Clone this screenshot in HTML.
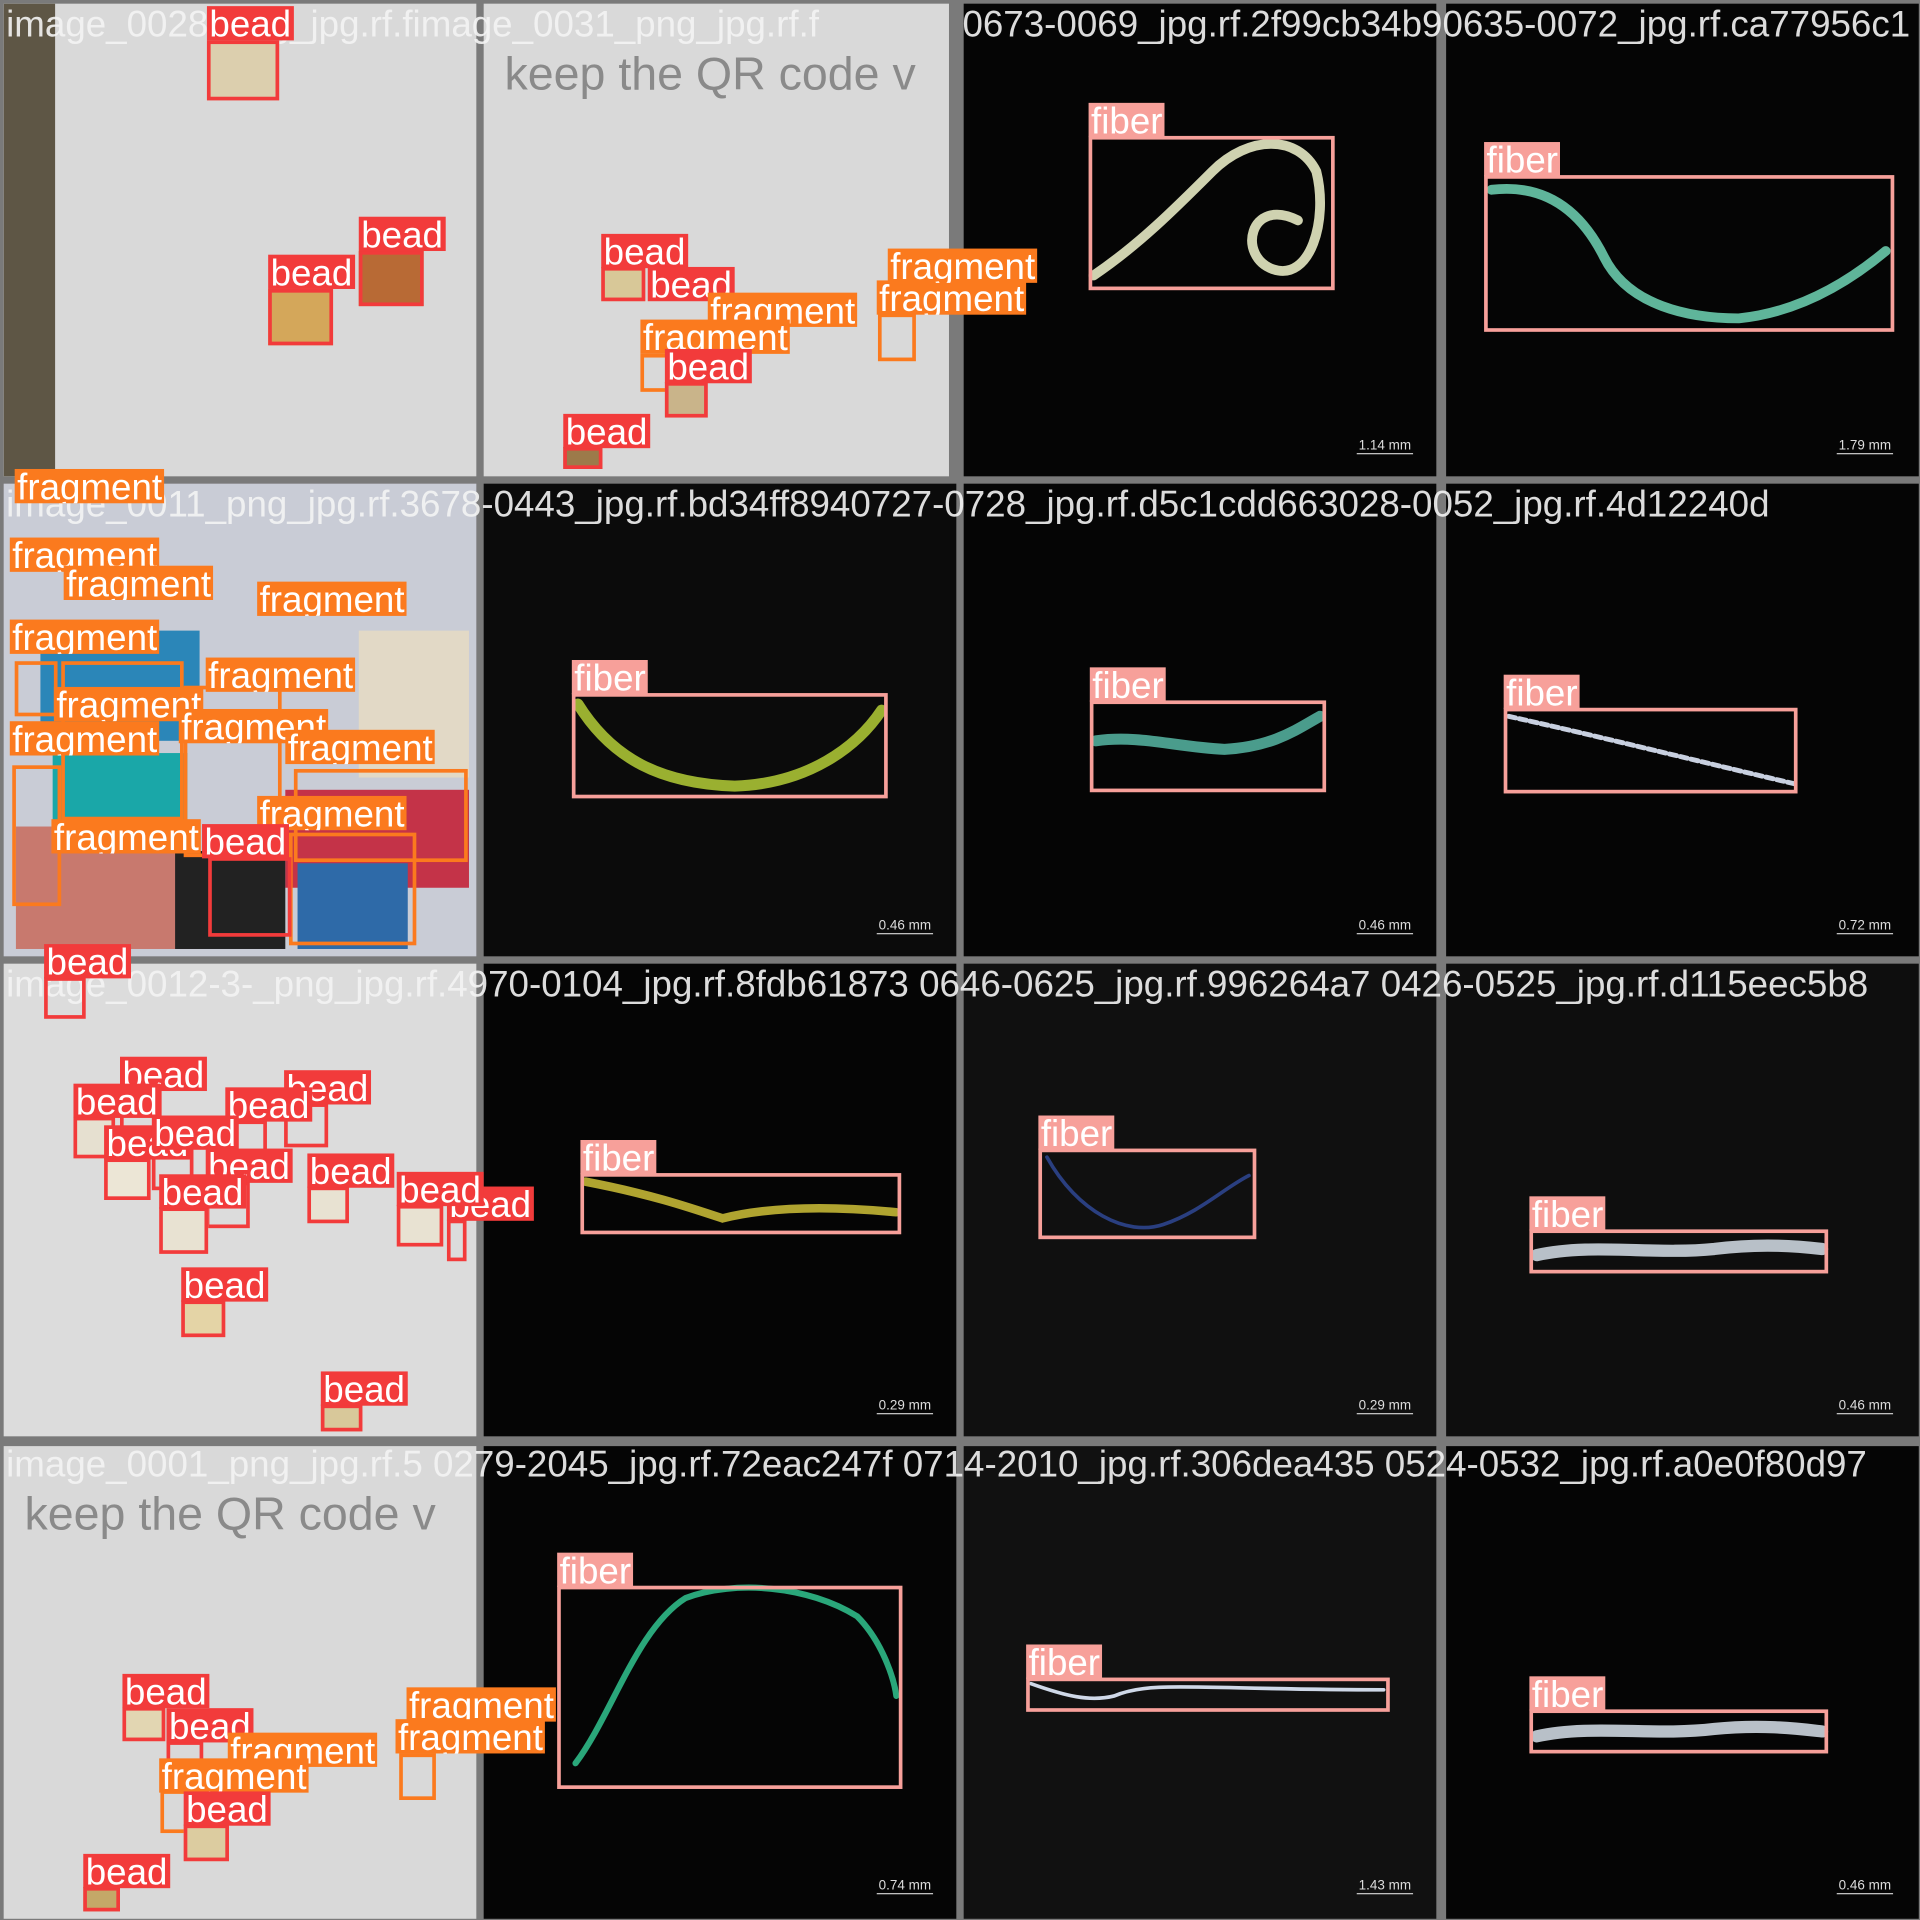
<!DOCTYPE html>
<html><head><meta charset="utf-8"><style>
html,body{margin:0;padding:0;background:#808080;width:1920px;height:1920px;overflow:hidden}
#w{position:absolute;left:0;top:0;width:1568px;height:1568px;transform:scale(1.22449);transform-origin:0 0;background:#7a7a7a;overflow:hidden;font-family:"Liberation Sans",sans-serif}
.t{position:absolute;width:386px;height:386px;overflow:hidden}
.lt{background:#d9d9d9}
.dk{background:#050505}
.b{position:absolute;border:3px solid;box-sizing:border-box}
.r{border-color:#f23b3b}.o{border-color:#fb7a1e}.f{border-color:#f7a09a}
.l{position:absolute;color:#fff;font-size:30px;line-height:31px;height:28px;padding:0 2px;white-space:nowrap;overflow:hidden}
.lr{background:#f23b3b}.lo{background:#fb7a1e}.lf{background:#f7a09a}
.ti{position:absolute;color:#f4f4f4;font-size:30px;line-height:30px;white-space:nowrap;opacity:.9}
.sc{position:absolute;color:#ddd;font-size:11px;border-bottom:1px solid #ccc;width:46px;text-align:center}
.q{position:absolute;color:#8a8a8a;font-size:38px;white-space:nowrap}
</style></head><body><div id="w">
<!-- row 0 -->
<div class="t lt" style="left:3px;top:3px"><div style="position:absolute;left:0;top:0;width:42px;height:386px;background:#5e5645"></div></div>
<div class="t lt" style="left:395px;top:3px;width:380px"></div>
<div class="t dk" style="left:787px;top:3px"></div>
<div class="t dk" style="left:1181px;top:3px"></div>
<!-- row 1 -->
<div class="t" style="left:3px;top:395px;background:#c9ccd6">
 <div style="position:absolute;left:30px;top:120px;width:130px;height:90px;background:#2b86b8"></div>
 <div style="position:absolute;left:40px;top:220px;width:110px;height:70px;background:#1aa7a8"></div>
 <div style="position:absolute;left:10px;top:280px;width:150px;height:100px;background:#c8796e"></div>
 <div style="position:absolute;left:230px;top:250px;width:150px;height:80px;background:#c43348"></div>
 <div style="position:absolute;left:240px;top:310px;width:90px;height:70px;background:#2e6aa8"></div>
 <div style="position:absolute;left:140px;top:300px;width:90px;height:80px;background:#222"></div>
 <div style="position:absolute;left:290px;top:120px;width:90px;height:120px;background:#e2d9c6"></div>
</div>
<div class="t dk" style="left:395px;top:395px;background:#0b0b0b"></div>
<div class="t dk" style="left:787px;top:395px"></div>
<div class="t dk" style="left:1181px;top:395px"></div>
<!-- row 2 -->
<div class="t lt" style="left:3px;top:787px;background:#dcdcdc"></div>
<div class="t dk" style="left:395px;top:787px"></div>
<div class="t dk" style="left:787px;top:787px;background:#101010"></div>
<div class="t dk" style="left:1181px;top:787px;background:#0e0e0e"></div>
<!-- row 3 -->
<div class="t lt" style="left:3px;top:1181px"></div>
<div class="t dk" style="left:395px;top:1181px"></div>
<div class="t dk" style="left:787px;top:1181px;background:#111"></div>
<div class="t dk" style="left:1181px;top:1181px"></div>

<div class="q" style="left:412px;top:40px">keep the QR code v</div>
<div class="q" style="left:20px;top:1216px">keep the QR code v</div>

<!-- fibers -->
<svg width="1568" height="1568" style="position:absolute;left:0;top:0" fill="none" stroke-linecap="round">
<path d="M893 225 C930 200 960 170 990 140 S1060 110 1075 140 C1085 180 1070 230 1040 220 C1010 210 1020 160 1060 180" stroke="#cfd2b0" stroke-width="8"/>
<path d="M1218 155 C1260 150 1290 170 1310 210 C1330 250 1380 260 1420 260 C1470 255 1510 230 1540 205" stroke="#5fb59a" stroke-width="8"/>
<path d="M472 575 C500 620 540 640 600 642 C660 640 700 610 720 580" stroke="#9ab030" stroke-width="9"/>
<path d="M895 605 C930 600 960 610 1000 612 C1040 610 1060 595 1078 585" stroke="#4a9c8c" stroke-width="9"/>
<path d="M1232 585 C1300 600 1380 620 1465 640" stroke="#c8d0e0" stroke-width="4" stroke-dasharray="6 3"/>
<path d="M478 965 C530 975 560 985 590 995 C630 985 680 985 732 990" stroke="#b0a430" stroke-width="7"/>
<path d="M855 945 C880 990 920 1010 950 1000 C980 990 1000 970 1020 960" stroke="#2a3f80" stroke-width="3"/>
<path d="M1255 1025 C1300 1015 1350 1025 1400 1020 C1440 1015 1470 1018 1488 1020" stroke="#b8c0c8" stroke-width="10"/>
<path d="M470 1440 C500 1400 520 1330 560 1305 C600 1290 660 1295 700 1320 C720 1340 730 1370 732 1385" stroke="#2aa77a" stroke-width="5"/>
<path d="M842 1375 C870 1385 890 1390 910 1385 C940 1372 980 1380 1130 1380" stroke="#cfd8e8" stroke-width="3"/>
<path d="M1255 1418 C1300 1408 1350 1418 1400 1412 C1440 1408 1470 1412 1488 1414" stroke="#b8c0c8" stroke-width="10"/>
</svg>

<!-- scale labels -->
<div class="sc" style="left:1108px;top:358px">1.14 mm</div>
<div class="sc" style="left:1500px;top:358px">1.79 mm</div>
<div class="sc" style="left:716px;top:750px">0.46 mm</div>
<div class="sc" style="left:1108px;top:750px">0.46 mm</div>
<div class="sc" style="left:1500px;top:750px">0.72 mm</div>
<div class="sc" style="left:716px;top:1142px">0.29 mm</div>
<div class="sc" style="left:1108px;top:1142px">0.29 mm</div>
<div class="sc" style="left:1500px;top:1142px">0.46 mm</div>
<div class="sc" style="left:716px;top:1534px">0.74 mm</div>
<div class="sc" style="left:1108px;top:1534px">1.43 mm</div>
<div class="sc" style="left:1500px;top:1534px">0.46 mm</div>

<!-- titles -->
<div class="ti" style="left:5px;top:6px">image_0028_png_jpg.rf.fimage_0031_png_jpg.rf.f</div>
<div class="ti" style="left:786px;top:6px">0673-0069_jpg.rf.2f99cb34b90635-0072_jpg.rf.ca77956c1</div>
<div class="ti" style="left:5px;top:398px">image_0011_png_jpg.rf.3678-0443_jpg.rf.bd34ff8940727-0728_jpg.rf.d5c1cdd663028-0052_jpg.rf.4d12240d</div>
<div class="ti" style="left:5px;top:790px">image_0012-3-_png_jpg.rf.4970-0104_jpg.rf.8fdb61873 0646-0625_jpg.rf.996264a7 0426-0525_jpg.rf.d115eec5b8</div>
<div class="ti" style="left:5px;top:1182px">image_0001_png_jpg.rf.5 0279-2045_jpg.rf.72eac247f 0714-2010_jpg.rf.306dea435 0524-0532_jpg.rf.a0e0f80d97</div>

<!-- fiber boxes -->
<div class="b f" style="left:889px;top:111px;width:201px;height:126px"></div><div class="l lf" style="left:889px;top:84px">fiber</div>
<div class="b f" style="left:1212px;top:143px;width:335px;height:128px"></div><div class="l lf" style="left:1212px;top:116px">fiber</div>
<div class="b f" style="left:467px;top:566px;width:258px;height:86px"></div><div class="l lf" style="left:467px;top:539px">fiber</div>
<div class="b f" style="left:890px;top:572px;width:193px;height:75px"></div><div class="l lf" style="left:890px;top:545px">fiber</div>
<div class="b f" style="left:1228px;top:578px;width:240px;height:70px"></div><div class="l lf" style="left:1228px;top:551px">fiber</div>
<div class="b f" style="left:474px;top:958px;width:262px;height:50px"></div><div class="l lf" style="left:474px;top:931px">fiber</div>
<div class="b f" style="left:848px;top:938px;width:178px;height:74px"></div><div class="l lf" style="left:848px;top:911px">fiber</div>
<div class="b f" style="left:1249px;top:1004px;width:244px;height:36px"></div><div class="l lf" style="left:1249px;top:977px">fiber</div>
<div class="b f" style="left:455px;top:1295px;width:282px;height:166px"></div><div class="l lf" style="left:455px;top:1268px">fiber</div>
<div class="b f" style="left:838px;top:1370px;width:297px;height:28px"></div><div class="l lf" style="left:838px;top:1343px">fiber</div>
<div class="b f" style="left:1249px;top:1396px;width:244px;height:36px"></div><div class="l lf" style="left:1249px;top:1369px">fiber</div>

<!-- tile 0,0 -->
<div class="b r" style="left:169px;top:33px;width:59px;height:49px;background:#dccfae"></div><div class="l lr" style="left:169px;top:5px">bead</div>
<div class="b r" style="left:219px;top:236px;width:53px;height:46px;background:#d4a75a"></div><div class="l lr" style="left:219px;top:208px">bead</div>
<div class="b r" style="left:293px;top:205px;width:53px;height:45px;background:#b86a35"></div><div class="l lr" style="left:293px;top:177px">bead</div>
<!-- tile 1,0 -->
<div class="b r" style="left:491px;top:218px;width:36px;height:28px;background:#d8c898"></div><div class="l lr" style="left:491px;top:191px">bead</div>
<div class="b o" style="left:717px;top:256px;width:31px;height:39px"></div>
<div class="b o" style="left:523px;top:289px;width:37px;height:31px"></div>
<div class="b r" style="left:543px;top:312px;width:35px;height:29px;background:#c9b48a"></div>
<div class="b r" style="left:460px;top:365px;width:32px;height:18px;background:#9c7a4a"></div>
<div class="l lr" style="left:529px;top:218px">bead</div>
<div class="l lo" style="left:578px;top:239px">fragment</div>
<div class="l lo" style="left:523px;top:261px">fragment</div>
<div class="l lr" style="left:543px;top:285px">bead</div>
<div class="l lr" style="left:460px;top:338px">bead</div>
<div class="l lo" style="left:716px;top:229px">fragment</div>
<div class="l lo" style="left:725px;top:203px">fragment</div>
<!-- tile 0,1 fragments -->
<div class="b o" style="left:10px;top:625px;width:40px;height:115px"></div>
<div class="b o" style="left:240px;top:628px;width:142px;height:76px"></div>
<div class="b o" style="left:236px;top:680px;width:104px;height:92px"></div>
<div class="b o" style="left:50px;top:540px;width:100px;height:130px"></div>
<div class="b o" style="left:150px;top:560px;width:80px;height:140px"></div>
<div class="b r" style="left:170px;top:700px;width:68px;height:65px"></div>
<div class="b o" style="left:12px;top:540px;width:35px;height:45px"></div>
<div class="l lo" style="left:12px;top:383px">fragment</div>
<div class="l lo" style="left:8px;top:439px">fragment</div>
<div class="l lo" style="left:52px;top:462px">fragment</div>
<div class="l lo" style="left:210px;top:475px">fragment</div>
<div class="l lo" style="left:8px;top:506px">fragment</div>
<div class="l lo" style="left:168px;top:537px">fragment</div>
<div class="l lo" style="left:44px;top:561px">fragment</div>
<div class="l lo" style="left:146px;top:579px">fragment</div>
<div class="l lo" style="left:8px;top:589px">fragment</div>
<div class="l lo" style="left:233px;top:596px">fragment</div>
<div class="l lo" style="left:210px;top:650px">fragment</div>
<div class="l lo" style="left:42px;top:669px">fragment</div>
<div class="l lr" style="left:165px;top:673px">bead</div>
<div class="b r" style="left:36px;top:798px;width:34px;height:34px"></div>
<div class="l lr" style="left:36px;top:771px">bead</div>
<!-- tile 0,2 beads -->
<div class="b r" style="left:98px;top:890px;width:34px;height:34px"></div>
<div class="b r" style="left:60px;top:912px;width:34px;height:34px;background:#e6e0d0"></div>
<div class="b r" style="left:184px;top:915px;width:34px;height:30px"></div>
<div class="b r" style="left:232px;top:901px;width:36px;height:36px"></div>
<div class="b r" style="left:124px;top:938px;width:34px;height:34px"></div>
<div class="b r" style="left:85px;top:946px;width:38px;height:34px;background:#ece6d6"></div>
<div class="b r" style="left:168px;top:965px;width:36px;height:38px"></div>
<div class="b r" style="left:251px;top:969px;width:34px;height:30px;background:#e8e2d2"></div>
<div class="b r" style="left:130px;top:986px;width:40px;height:38px;background:#e8e2d2"></div>
<div class="b r" style="left:324px;top:984px;width:38px;height:34px;background:#e8e2d2"></div>
<div class="b r" style="left:365px;top:996px;width:16px;height:34px"></div>
<div class="b r" style="left:148px;top:1062px;width:36px;height:30px;background:#e4d4a6"></div>
<div class="b r" style="left:262px;top:1147px;width:34px;height:22px;background:#d8c89a"></div>
<div class="l lr" style="left:98px;top:863px">bead</div>
<div class="l lr" style="left:232px;top:874px">bead</div>
<div class="l lr" style="left:60px;top:885px">bead</div>
<div class="l lr" style="left:184px;top:888px">bead</div>
<div class="l lr" style="left:85px;top:919px">bead</div>
<div class="l lr" style="left:124px;top:911px">bead</div>
<div class="l lr" style="left:168px;top:938px">bead</div>
<div class="l lr" style="left:251px;top:942px">bead</div>
<div class="l lr" style="left:365px;top:969px">bead</div>
<div class="l lr" style="left:130px;top:959px">bead</div>
<div class="l lr" style="left:324px;top:957px">bead</div>
<div class="l lr" style="left:148px;top:1035px">bead</div>
<div class="l lr" style="left:262px;top:1120px">bead</div>
<!-- tile 0,3 -->
<div class="b r" style="left:100px;top:1394px;width:35px;height:28px;background:#e2d6b2"></div>
<div class="b r" style="left:136px;top:1422px;width:30px;height:30px"></div>
<div class="b o" style="left:131px;top:1462px;width:39px;height:35px"></div>
<div class="b r" style="left:150px;top:1490px;width:37px;height:30px;background:#dccca0"></div>
<div class="b r" style="left:68px;top:1541px;width:30px;height:20px;background:#c4a868"></div>
<div class="b o" style="left:326px;top:1432px;width:30px;height:38px"></div>
<div class="l lr" style="left:100px;top:1367px">bead</div>
<div class="l lr" style="left:136px;top:1395px">bead</div>
<div class="l lo" style="left:186px;top:1415px">fragment</div>
<div class="l lo" style="left:130px;top:1436px">fragment</div>
<div class="l lr" style="left:150px;top:1463px">bead</div>
<div class="l lr" style="left:68px;top:1514px">bead</div>
<div class="l lo" style="left:332px;top:1378px">fragment</div>
<div class="l lo" style="left:323px;top:1404px">fragment</div>
</div></body></html>
